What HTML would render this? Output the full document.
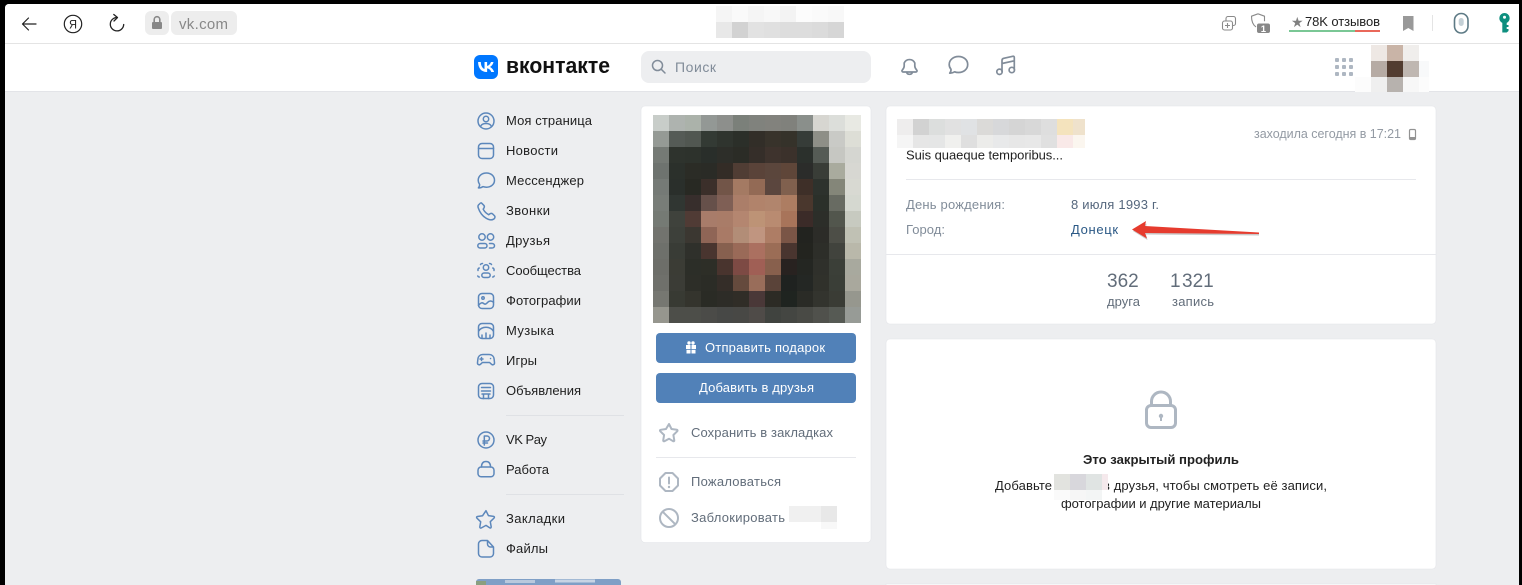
<!DOCTYPE html>
<html lang="ru"><head><meta charset="utf-8"><title>VK</title>
<style>
html,body{margin:0;padding:0;width:1522px;height:585px;overflow:hidden;background:#000}
svg{position:absolute;left:0;top:0;display:block;font-family:"Liberation Sans",sans-serif;font-size:13px}
text{white-space:pre}
.m{position:absolute;display:grid;grid-template-columns:repeat(13,16px);grid-auto-rows:16px;left:653px;top:115px;width:208px;height:208px}
.m i{display:block}
.s{fill:#1f1f1f}
.ic{fill:none;stroke:#5c87bb;stroke-width:1.5;stroke-linecap:round;stroke-linejoin:round}
.hd{fill:none;stroke:#818c99;stroke-width:1.7;stroke-linecap:round;stroke-linejoin:round}
.gr{fill:none;stroke:#aeb7c2;stroke-width:2;stroke-linecap:round;stroke-linejoin:round}
</style></head><body>
<svg width="1522" height="585" viewBox="0 0 1522 585" xmlns="http://www.w3.org/2000/svg" shape-rendering="geometricPrecision">
<!-- frame -->
<rect width="1522" height="585" fill="#000"/>
<path d="M9 4H1519V585H5V8a4 4 0 0 1 4-4z" fill="#edeef0"/>
<path d="M9 4H1519V92H5V8a4 4 0 0 1 4-4z" fill="#fff"/>
<rect x="5" y="43" width="1514" height="1" fill="#e4e4e4"/>
<rect x="5" y="91" width="1514" height="1" fill="#e3e4e8"/>

<!-- browser left -->
<path d="M36 24H22.500M28.500 18 22.500 24 28.500 30" fill="none" stroke="#222" stroke-width="1.200" stroke-linecap="round" stroke-linejoin="round"/>
<circle cx="73" cy="24" r="8.700" fill="none" stroke="#222" stroke-width="1.200"/>
<text x="69" y="28.500" font-size="12" fill="#222" textLength="8" lengthAdjust="spacingAndGlyphs">Я</text>
<path d="M117 17.500A6.700 6.700 0 1 0 123.700 24.500" fill="none" stroke="#222" stroke-width="1.300" stroke-linecap="round"/>
<path d="M113.800 14.500 117.500 17.500 114 21" fill="none" stroke="#222" stroke-width="1.300" stroke-linecap="round" stroke-linejoin="round"/>
<rect x="145" y="11" width="24" height="24" rx="6" fill="#ededed"/>
<rect x="171" y="11" width="66" height="24" rx="6" fill="#ededed"/>
<rect x="152" y="22" width="10" height="7" rx="1" fill="#888"/>
<path d="M154.200 22v-2.500a2.800 2.800 0 0 1 5.600 0V22" fill="none" stroke="#888" stroke-width="1.600"/>
<text x="179" y="29" font-size="15" fill="#888" textLength="49">vk.com</text>

<!-- address blur -->
<g shape-rendering="crispEdges">
<rect x="716" y="6" width="16" height="16" fill="#f5f5f5"/><rect x="732" y="6" width="16" height="16" fill="#fafafa"/><rect x="748" y="6" width="16" height="16" fill="#f5f5f5"/><rect x="764" y="6" width="16" height="16" fill="#f8f8f8"/><rect x="780" y="6" width="16" height="16" fill="#f3f3f3"/><rect x="796" y="6" width="16" height="16" fill="#fcfcfc"/><rect x="812" y="6" width="16" height="16" fill="#fafafa"/><rect x="828" y="6" width="16" height="16" fill="#f8f8f8"/>
<rect x="716" y="22" width="16" height="16" fill="#e8e8e8"/><rect x="732" y="22" width="16" height="16" fill="#d2d2d2"/><rect x="748" y="22" width="16" height="16" fill="#e2e2e2"/><rect x="764" y="22" width="16" height="16" fill="#e0e0e0"/><rect x="780" y="22" width="16" height="16" fill="#ddd"/><rect x="796" y="22" width="16" height="16" fill="#ddd"/><rect x="812" y="22" width="16" height="16" fill="#dbdbdb"/><rect x="828" y="22" width="16" height="16" fill="#d6d6d6"/>
</g>

<!-- browser right -->
<g fill="none" stroke="#8a8a8a" stroke-width="1.100" stroke-linejoin="round">
<rect x="1222.500" y="21" width="10" height="9" rx="2"/>
<path d="M1226 21v-2.500a2 2 0 0 1 2-2h5.500a2 2 0 0 1 2 2v5a2 2 0 0 1-2 2h-1M1227.500 23v5M1225 25.500h5"/>
<path d="M1258 13.800l6.500 2.400v5M1258 13.800l-6.500 2.400c0 5 1.500 8.700 4.500 10.700"/>
</g>
<rect x="1257" y="23.500" width="13" height="9.500" rx="2" fill="#888"/>
<text x="1260.700" y="32" font-size="9.500" font-weight="bold" fill="#fff">1</text>
<text x="1291" y="27" font-size="14" fill="#808080">★</text>
<text x="1305" y="26" font-size="13" fill="#222" textLength="75">78K отзывов</text>
<rect x="1289" y="30" width="66" height="2" fill="#7ac795"/><rect x="1355" y="30" width="25" height="2" fill="#e9685a"/>
<path d="M1403 16h10.500v15l-5.250-3-5.250 3z" fill="#999"/>
<rect x="1432" y="15" width="1" height="16" fill="#e4e4e4"/>
<rect x="1454.500" y="13.500" width="13.500" height="19.500" rx="6.700" fill="#fff" stroke="#5d7a85" stroke-width="1.600"/>
<rect x="1458.700" y="18" width="5" height="8" rx="2.500" fill="#c4d0d6"/>
<path fill-rule="evenodd" d="M1504.500 13a5.200 5.200 0 0 1 2.200 9.900V25h1.800v2h-1.800v2h1.800v2l-1.800 1.500h-4.400V22.900a5.200 5.200 0 0 1 2.200-9.900zM1504.500 15.800a1.500 1.500 0 1 0 0 3 1.500 1.500 0 0 0 0-3z" fill="#0e8f7f"/>

<!-- VK logo -->
<rect x="474" y="55" width="24" height="24" rx="6" fill="#0077ff"/>
<path d="M486.800 72.300c-5.470 0-8.590-3.750-8.720-9.990h2.740c.09 4.580 2.110 6.520 3.710 6.920V62.300h2.580v3.950c1.580-.17 3.240-1.970 3.800-3.950h2.580c-.43 2.440-2.220 4.240-3.500 4.980 1.280.6 3.320 2.170 4.100 5.010h-2.840c-.61-1.900-2.130-3.370-4.140-3.570v3.570z" fill="#fff" transform="translate(0,-.3)"/>
<text x="506" y="73" font-size="22" font-weight="bold" fill="#111" textLength="104" lengthAdjust="spacingAndGlyphs">вконтакте</text>

<!-- search -->
<rect x="641" y="51" width="230" height="32" rx="8" fill="#edeef0"/>
<circle cx="657.500" cy="65.500" r="5" fill="none" stroke="#818c99" stroke-width="1.500"/>
<path d="M661.300 69.300 665 73" stroke="#818c99" stroke-width="1.500" stroke-linecap="round"/>
<text x="675" y="72" font-size="14" fill="#818c99" textLength="41">Поиск</text>

<!-- header icons -->
<path class="hd" d="M902 70.500c.2-.6 2.200-2 2.200-4.500v-3a5.800 5.800 0 0 1 10.600 0v3c0 2.500 2 3.900 2.200 4.500.2.700-.3 1.500-1.100 1.500h-12.800c-.8 0-1.300-.8-1.100-1.500zM906.500 72c.4 1.500 1.600 2.300 3 2.300s2.600-.8 3-2.300"/>
<path class="hd" d="M958.500 56.500c-5 0-9.300 3.300-9.300 8 0 1.900.7 3.500 1.800 4.800.1 1.400-.3 2.900-1.300 3.800 1.900.1 3.500-.4 4.900-1.300 1.200.5 2.500.7 3.900.7 5 0 9.200-3.200 9.200-8s-4.200-8-9.200-8z"/>
<path class="hd" d="M1002 71.500V60.500c0-1.300.5-1.900 1.700-2.200l9-2c1-.2 1.600.2 1.600 1.200V70M1002 63.500l12.300-2.700"/>
<circle class="hd" cx="999.500" cy="71.800" r="2.700"/><circle class="hd" cx="1011.800" cy="70" r="2.700"/>

<!-- apps -->
<g fill="#aeb7c2">
<rect x="1335" y="58" width="4" height="4" rx="1"/><rect x="1342" y="58" width="4" height="4" rx="1"/><rect x="1349" y="58" width="4" height="4" rx="1"/>
<rect x="1335" y="65" width="4" height="4" rx="1"/><rect x="1342" y="65" width="4" height="4" rx="1"/><rect x="1349" y="65" width="4" height="4" rx="1"/>
<rect x="1335" y="72" width="4" height="4" rx="1"/><rect x="1342" y="72" width="4" height="4" rx="1"/><rect x="1349" y="72" width="4" height="4" rx="1"/>
</g>
<g shape-rendering="crispEdges">
<rect x="1371" y="45" width="16" height="16" fill="#eee8e4"/><rect x="1387" y="45" width="16" height="16" fill="#c9b4a7"/><rect x="1403" y="45" width="16" height="16" fill="#f0eeec"/>
<rect x="1371" y="61" width="16" height="16" fill="#b6aba4"/><rect x="1387" y="61" width="16" height="16" fill="#523c30"/><rect x="1403" y="61" width="16" height="16" fill="#bfb7b1"/><rect x="1419" y="61" width="10" height="16" fill="#f8f9fa"/>
<rect x="1355" y="77" width="16" height="15" fill="#fcfcfc"/><rect x="1371" y="77" width="16" height="15" fill="#efefef"/><rect x="1387" y="77" width="16" height="15" fill="#b7b2ae"/><rect x="1403" y="77" width="16" height="15" fill="#f7f7f7"/><rect x="1419" y="77" width="10" height="15" fill="#fcfcfc"/>
</g>

<!-- sidebar text -->
<text class="s" x="506" y="125" textLength="86">Моя страница</text>
<text class="s" x="506" y="155" textLength="52">Новости</text>
<text class="s" x="506" y="185" textLength="78">Мессенджер</text>
<text class="s" x="506" y="215" textLength="44">Звонки</text>
<text class="s" x="506" y="245" textLength="44">Друзья</text>
<text class="s" x="506" y="275" textLength="75">Сообщества</text>
<text class="s" x="506" y="305" textLength="75">Фотографии</text>
<text class="s" x="506" y="335" textLength="48">Музыка</text>
<text class="s" x="506" y="365" textLength="31">Игры</text>
<text class="s" x="506" y="395" textLength="75">Объявления</text>
<text class="s" x="506" y="444" textLength="41">VK Pay</text>
<text class="s" x="506" y="474" textLength="43">Работа</text>
<text class="s" x="506" y="523" textLength="59">Закладки</text>
<text class="s" x="506" y="553" textLength="42">Файлы</text>
<rect x="506" y="415" width="118" height="1" fill="#dfe1e5"/>
<rect x="506" y="494" width="118" height="1" fill="#dfe1e5"/>

<!-- sidebar icons -->
<g class="ic">
<circle cx="486" cy="121" r="8"/><circle cx="486" cy="119" r="2.700"/><path d="M480.500 126.500c.8-2 2.900-3 5.500-3s4.700 1 5.500 3"/>
<rect x="478.500" y="143.500" width="15" height="15" rx="3.500"/><path d="M478.500 148.500h15"/>
<path d="M486.500 173c-4.700 0-8.300 3-8.300 7.200 0 1.600.5 3 1.400 4.200.1 1.300-.3 2.500-1.200 3.500 1.800 0 3.300-.4 4.500-1.300 1.100.4 2.300.6 3.600.6 4.600 0 8-3 8-7s-3.400-7.200-8-7.200z"/>
<path d="M479.500 204c-1.300.8-2 2-1.200 4 1.300 3.800 4.200 8 7.500 10 2.800 1.800 5.800 2.300 7.800 1.200 1.300-.8 1.800-2.300 1-3.300l-2-2c-.8-.7-1.800-.6-2.600-.1l-1.300.9c-2.500-1.300-4.200-3-5.500-5.500l.8-1.300c.5-.9.500-1.900-.2-2.600l-2-2c-.6-.6-1.400-.6-2.300.7z"/>
<circle cx="482" cy="237" r="3.200"/><circle cx="490.500" cy="237" r="3.200"/>
<rect x="477.800" y="243.500" width="9.200" height="4.500" rx="2.250"/><path d="M489.500 243.500h2.500c1.500 0 2.500 1 2.500 2.200 0 1.300-1 2.300-2.500 2.300h-2.500"/>
<circle cx="486" cy="267.500" r="2.700"/><path d="M480.500 264.500a2 2 0 0 1 2-1M491.500 264.500a2 2 0 0 0-2-1M478 270.500a2 2 0 0 1 1.200-2.500M494 270.500a2 2 0 0 0-1.200-2.500"/>
<rect x="481.800" y="273" width="8.400" height="4.500" rx="2.250"/><path d="M477.800 276c.3.700.8 1 1.500 1M494.200 276c-.3.700-.8 1-1.500 1"/>
<rect x="478.500" y="293.500" width="15" height="15" rx="3.500"/><circle cx="483" cy="298" r="1.200"/><path d="M478.500 305.500c2-2.800 3.700-3.300 5.200-2 1.400 1.200 2.600.5 3.800-1 1.500-1.800 3.800-2 6-.3"/>
<rect x="478.500" y="323.500" width="15" height="15" rx="3.500"/><path d="M478.800 331c1-2.200 4-3.800 7.200-3.800s6.200 1.600 7.200 3.800M482 338v-3M486 338v-5M490 338v-3"/>
<path d="M482.800 354.500h6.400c2.800 0 4.600 1.800 4.900 4.500l.4 3.700c.2 1.800-1.800 2.800-3.100 1.500l-1.800-1.700h-7.200l-1.800 1.700c-1.300 1.300-3.300.3-3.100-1.500l.4-3.700c.3-2.700 2.100-4.500 4.900-4.500z"/><path d="M481.500 357.500v3M480 359h3"/><path d="M490.500 358.500h.1"/>
<rect x="478.500" y="383.500" width="15" height="15" rx="3.500"/><path d="M481.500 387.500h9M481.500 391h9M482 394h8M483.500 394v4.500M488.500 394v4.500"/>
<circle cx="486" cy="440" r="8"/><path d="M484.300 445v-9h2.700a2.400 2.400 0 0 1 0 5h-4M483 443h4.500"/>
<rect x="478" y="467" width="16" height="9.800" rx="3.200"/><path d="M481.500 467c0-3.700 1.800-5.500 4.500-5.500s4.500 1.800 4.500 5.500"/>
<path d="M486 510.700l2.400 4.900 5.200.8c.8.100 1.100 1 .5 1.600l-3.800 3.700 .9 5.200c.1.800-.7 1.400-1.400 1L486 525.400 481.200 528c-.7.400-1.500-.2-1.400-1l.9-5.200-3.800-3.700c-.6-.6-.3-1.500.5-1.600l5.200-.8z"/>
<path d="M478.500 544a3.500 3.500 0 0 1 3.500-3.500h5.500l6 6.500v6.500a3.500 3.500 0 0 1-3.500 3.500h-8a3.500 3.500 0 0 1-3.500-3.500zM487.500 540.500v3.500a3 3 0 0 0 3 3h3"/>
</g>

<!-- sidebar promo -->
<path d="M476 585v-3a3 3 0 0 1 3-3h139a3 3 0 0 1 3 3v3z" fill="#7f9fc6"/>
<rect x="476" y="581" width="10" height="4" fill="#8a9f80"/><rect x="505" y="580" width="30" height="3" fill="#b9c9dd"/><rect x="555" y="579.500" width="40" height="3" fill="#c7d4e4"/>

<!-- photo card -->
<rect x="641" y="106" width="230" height="436.500" rx="4" fill="#fff" stroke="#e3e4e8" stroke-width=".6"/>
<rect x="656" y="333" width="200" height="30" rx="4" fill="#5181b8"/>
<rect x="656" y="373" width="200" height="30" rx="4" fill="#5181b8"/>
<g fill="#fff"><rect x="686" y="345" width="4.500" height="4"/><rect x="691.500" y="345" width="4.500" height="4"/><rect x="686.500" y="349.800" width="4" height="3.700"/><rect x="691.500" y="349.800" width="4" height="3.700"/><circle cx="689" cy="343" r="1.700"/><circle cx="693" cy="343" r="1.700"/></g>
<text x="705" y="352" fill="#fff" textLength="120">Отправить подарок</text>
<text x="699" y="392" fill="#fff" textLength="115">Добавить в друзья</text>
<path class="gr" d="M669 424l2.500 5 5.400.8c.6.100.9.900.4 1.400l-3.900 3.800.9 5.400c.1.600-.6 1.100-1.200.8L669 438.700l-4.600 2.500c-.6.300-1.300-.2-1.200-.8l.9-5.400-3.900-3.800c-.5-.5-.2-1.300.4-1.400l5.400-.8z" stroke-width="1.700"/>
<text x="691" y="437" fill="#626d7a" textLength="142">Сохранить в закладках</text>
<rect x="656" y="457" width="200" height="1" fill="#e7e8ec"/>
<path class="gr" d="M665.500 473h7l5.500 5.500v7l-5.500 5.500h-7l-5.500-5.500v-7z"/><path d="M669 477.500v6" stroke="#aeb7c2" stroke-width="2" stroke-linecap="round"/><circle cx="669" cy="487" r="1.200" fill="#aeb7c2"/>
<text x="691" y="486" fill="#626d7a" textLength="90">Пожаловаться</text>
<circle class="gr" cx="669" cy="518" r="9"/><path d="M662.800 511.800 675.200 524.200" stroke="#aeb7c2" stroke-width="2"/>
<text x="691" y="522" fill="#626d7a" textLength="94">Заблокировать</text>
<g shape-rendering="crispEdges"><rect x="789" y="506" width="32" height="16" fill="#f0f0f0"/><rect x="821" y="506" width="16" height="16" fill="#e8e8e8"/><rect x="821" y="522" width="16" height="7" fill="#f8f8f8"/></g>

<!-- info card -->
<rect x="886" y="106" width="550" height="218" rx="4" fill="#fff" stroke="#e3e4e8" stroke-width=".6"/>
<g shape-rendering="crispEdges">
<rect x="897" y="119" width="16" height="16" fill="#eeeded"/><rect x="913" y="119" width="16" height="16" fill="#d2d2d2"/><rect x="929" y="119" width="16" height="16" fill="#dcdedd"/><rect x="945" y="119" width="16" height="16" fill="#e1e1e1"/><rect x="961" y="119" width="16" height="16" fill="#e0e2e4"/><rect x="977" y="119" width="16" height="16" fill="#dbdad8"/><rect x="993" y="119" width="16" height="16" fill="#d7d8da"/><rect x="1009" y="119" width="16" height="16" fill="#d5d5d5"/><rect x="1025" y="119" width="16" height="16" fill="#d8d8d8"/><rect x="1041" y="119" width="16" height="16" fill="#dedede"/><rect x="1057" y="119" width="16" height="16" fill="#f4e3bd"/><rect x="1073" y="119" width="12" height="16" fill="#efe2cc"/>
<rect x="897" y="135" width="16" height="13" fill="#f5f5f5"/><rect x="913" y="135" width="16" height="13" fill="#e6e6e6"/><rect x="929" y="135" width="16" height="13" fill="#e5e6e6"/><rect x="945" y="135" width="16" height="13" fill="#f0f0ee"/><rect x="961" y="135" width="16" height="13" fill="#dfdfdf"/><rect x="977" y="135" width="16" height="13" fill="#ececea"/><rect x="993" y="135" width="16" height="13" fill="#e8e9ea"/><rect x="1009" y="135" width="16" height="13" fill="#e7e7e7"/><rect x="1025" y="135" width="16" height="13" fill="#e8e8e8"/><rect x="1041" y="135" width="16" height="13" fill="#e0e0e0"/><rect x="1057" y="135" width="16" height="13" fill="#f9e9e8"/><rect x="1073" y="135" width="12" height="13" fill="#fbf6ef"/>
</g>
<text x="1254" y="138" font-size="12.500" fill="#939aa3" textLength="147">заходила сегодня в 17:21</text>
<rect x="1409.500" y="129.500" width="6" height="10" rx="1.200" fill="#fff" stroke="#939393" stroke-width="1.200"/>
<rect x="1410" y="137" width="5" height="2.500" fill="#939393"/>
<text x="906" y="159.500" fill="#1f1f1f" textLength="157">Suis quaeque temporibus...</text>
<rect x="906" y="179" width="510" height="1" fill="#e7e8ec"/>
<text x="906" y="209" fill="#818c99" textLength="99">День рождения:</text>
<text x="906" y="234" fill="#818c99" textLength="39">Город:</text>
<text x="1071" y="209" fill="#55677d" textLength="88">8 июля 1993 г.</text>
<text x="1071" y="234" fill="#2a5885" textLength="47">Донецк</text>
<path d="M1133 231 1146.500 223.500 1146 228 1259 234 1259 235.500 1146 234.500 1147.500 240z" fill="#bbb" opacity=".8"/>
<path d="M1132 229.500 1146 221 1145 226 1259 232.500 1259 234 1145 233 1147 238.500z" fill="#e63b2e"/>
<rect x="886" y="254" width="550" height="1" fill="#e7e8ec"/>
<text x="1107" y="287" font-size="19" fill="#626d7a">362</text>
<text x="1107" y="306" fill="#626d7a" textLength="33">друга</text>
<text x="1170" y="287" font-size="19" fill="#626d7a">1</text>
<text x="1182" y="287" font-size="19" fill="#626d7a">321</text>
<text x="1172" y="306" fill="#626d7a" textLength="42">запись</text>

<!-- closed card -->
<rect x="886" y="339" width="550" height="230" rx="4" fill="#fff" stroke="#e3e4e8" stroke-width=".6"/>
<rect x="886" y="584" width="550" height="2" fill="#fff" stroke="#e3e4e8" stroke-width=".6"/>
<rect x="1146.500" y="405.500" width="29" height="22" rx="4.500" fill="none" stroke="#aeb7c2" stroke-width="3"/>
<path d="M1151.500 405v-3.500a9.500 9.500 0 0 1 19 0V405" fill="none" stroke="#aeb7c2" stroke-width="3"/>
<circle cx="1161" cy="416" r="2.200" fill="#aeb7c2"/><rect x="1160" y="416" width="2" height="5" fill="#aeb7c2"/>
<text x="1083" y="464" font-weight="bold" fill="#222" textLength="156" lengthAdjust="spacingAndGlyphs">Это закрытый профиль</text>
<text x="995" y="490" fill="#1f1f1f" textLength="57">Добавьте</text>
<text x="1103" y="490" fill="#1f1f1f" textLength="224">в друзья, чтобы смотреть её записи,</text>
<text x="1061" y="508" fill="#1f1f1f" textLength="200">фотографии и другие материалы</text>
<g shape-rendering="crispEdges">
<rect x="1054" y="474" width="16" height="16" fill="#e2e3df"/><rect x="1070" y="474" width="16" height="16" fill="#d8d7dc"/><rect x="1086" y="474" width="16" height="16" fill="#e0e4e3"/><rect x="1102" y="474" width="6" height="16" fill="#f5e9ec"/>
<rect x="1054" y="490" width="16" height="10" fill="#fafafa"/><rect x="1070" y="490" width="16" height="10" fill="#f6f6f6"/><rect x="1086" y="490" width="16" height="10" fill="#f3f5f5"/>
</g>
</svg>

<div class="m">
<i style="background:#c8cdc9"></i><i style="background:#aeb3af"></i><i style="background:#abb2aa"></i><i style="background:#939895"></i><i style="background:#8d8f8c"></i><i style="background:#7b807a"></i><i style="background:#80827d"></i><i style="background:#82827d"></i><i style="background:#80817c"></i><i style="background:#8a8f8b"></i><i style="background:#d7d6d1"></i><i style="background:#dcdeda"></i><i style="background:#e8e9e3"></i>
<i style="background:#959a95"></i><i style="background:#555b56"></i><i style="background:#515751"></i><i style="background:#333a34"></i><i style="background:#2f342e"></i><i style="background:#2b2f29"></i><i style="background:#322e28"></i><i style="background:#38332b"></i><i style="background:#35322a"></i><i style="background:#363c38"></i><i style="background:#8e8f87"></i><i style="background:#c9cac6"></i><i style="background:#ddded6"></i>
<i style="background:#757a75"></i><i style="background:#2e332d"></i><i style="background:#2d322c"></i><i style="background:#292e2a"></i><i style="background:#2d2e29"></i><i style="background:#2b2c26"></i><i style="background:#352e29"></i><i style="background:#3e332d"></i><i style="background:#3b312b"></i><i style="background:#2b302c"></i><i style="background:#555b55"></i><i style="background:#c6c7c2"></i><i style="background:#d5d6d1"></i>
<i style="background:#6e736f"></i><i style="background:#2b302b"></i><i style="background:#2b2c26"></i><i style="background:#2a2b26"></i><i style="background:#332c26"></i><i style="background:#503d34"></i><i style="background:#5a4339"></i><i style="background:#5b463c"></i><i style="background:#5f4639"></i><i style="background:#2b2c2a"></i><i style="background:#393d37"></i><i style="background:#a9ab9e"></i><i style="background:#d7d7d2"></i>
<i style="background:#757a76"></i><i style="background:#2a2f2b"></i><i style="background:#282923"></i><i style="background:#3b2f2a"></i><i style="background:#725548"></i><i style="background:#a47a63"></i><i style="background:#936a55"></i><i style="background:#5b463e"></i><i style="background:#80604e"></i><i style="background:#3e2f28"></i><i style="background:#2d322d"></i><i style="background:#848679"></i><i style="background:#d8d9d2"></i>
<i style="background:#787d78"></i><i style="background:#303632"></i><i style="background:#372e2c"></i><i style="background:#66504a"></i><i style="background:#7f5f55"></i><i style="background:#ab7e69"></i><i style="background:#b1836b"></i><i style="background:#b1856d"></i><i style="background:#ad7d62"></i><i style="background:#4a372d"></i><i style="background:#2b302a"></i><i style="background:#686b62"></i><i style="background:#d5d8d0"></i>
<i style="background:#757a74"></i><i style="background:#3f423c"></i><i style="background:#503b35"></i><i style="background:#a87c6a"></i><i style="background:#a97c68"></i><i style="background:#b48670"></i><i style="background:#bd9376"></i><i style="background:#b98b71"></i><i style="background:#a8745a"></i><i style="background:#3b2b28"></i><i style="background:#2c2e29"></i><i style="background:#52564d"></i><i style="background:#c7cac0"></i>
<i style="background:#72736e"></i><i style="background:#3d403a"></i><i style="background:#3b3731"></i><i style="background:#8f6556"></i><i style="background:#a97a66"></i><i style="background:#b28d77"></i><i style="background:#c09580"></i><i style="background:#ae7d65"></i><i style="background:#7a5546"></i><i style="background:#22231f"></i><i style="background:#2c2c28"></i><i style="background:#4d4e47"></i><i style="background:#c0c1b4"></i>
<i style="background:#6e706b"></i><i style="background:#393c36"></i><i style="background:#2f302b"></i><i style="background:#49352f"></i><i style="background:#87604f"></i><i style="background:#9a6a58"></i><i style="background:#ab7060"></i><i style="background:#9b6d56"></i><i style="background:#49352f"></i><i style="background:#23241f"></i><i style="background:#2d2e29"></i><i style="background:#41433d"></i><i style="background:#b9b8aa"></i>
<i style="background:#6d6e69"></i><i style="background:#3b3c35"></i><i style="background:#2c2e28"></i><i style="background:#2d2e27"></i><i style="background:#49342e"></i><i style="background:#7d4a44"></i><i style="background:#a05f55"></i><i style="background:#88604d"></i><i style="background:#282220"></i><i style="background:#242622"></i><i style="background:#2f302b"></i><i style="background:#3b3f38"></i><i style="background:#a8a99e"></i>
<i style="background:#6f706b"></i><i style="background:#3b3c36"></i><i style="background:#2d2e28"></i><i style="background:#2b2c26"></i><i style="background:#342d28"></i><i style="background:#654a3d"></i><i style="background:#996d5a"></i><i style="background:#5a4339"></i><i style="background:#1f2220"></i><i style="background:#242724"></i><i style="background:#30312b"></i><i style="background:#3a3e37"></i><i style="background:#a9a89d"></i>
<i style="background:#767771"></i><i style="background:#383a33"></i><i style="background:#34342d"></i><i style="background:#2a2b25"></i><i style="background:#2d2c27"></i><i style="background:#302d27"></i><i style="background:#4a3838"></i><i style="background:#2c2b25"></i><i style="background:#1f2420"></i><i style="background:#2a2b26"></i><i style="background:#33342e"></i><i style="background:#3a3c35"></i><i style="background:#96978e"></i>
<i style="background:#96968e"></i><i style="background:#4d4e49"></i><i style="background:#4d4e49"></i><i style="background:#4b4b48"></i><i style="background:#474846"></i><i style="background:#484845"></i><i style="background:#4f4b48"></i><i style="background:#40433f"></i><i style="background:#444642"></i><i style="background:#494a45"></i><i style="background:#50514c"></i><i style="background:#565a54"></i><i style="background:#979b96"></i>
</div>
</body></html>
